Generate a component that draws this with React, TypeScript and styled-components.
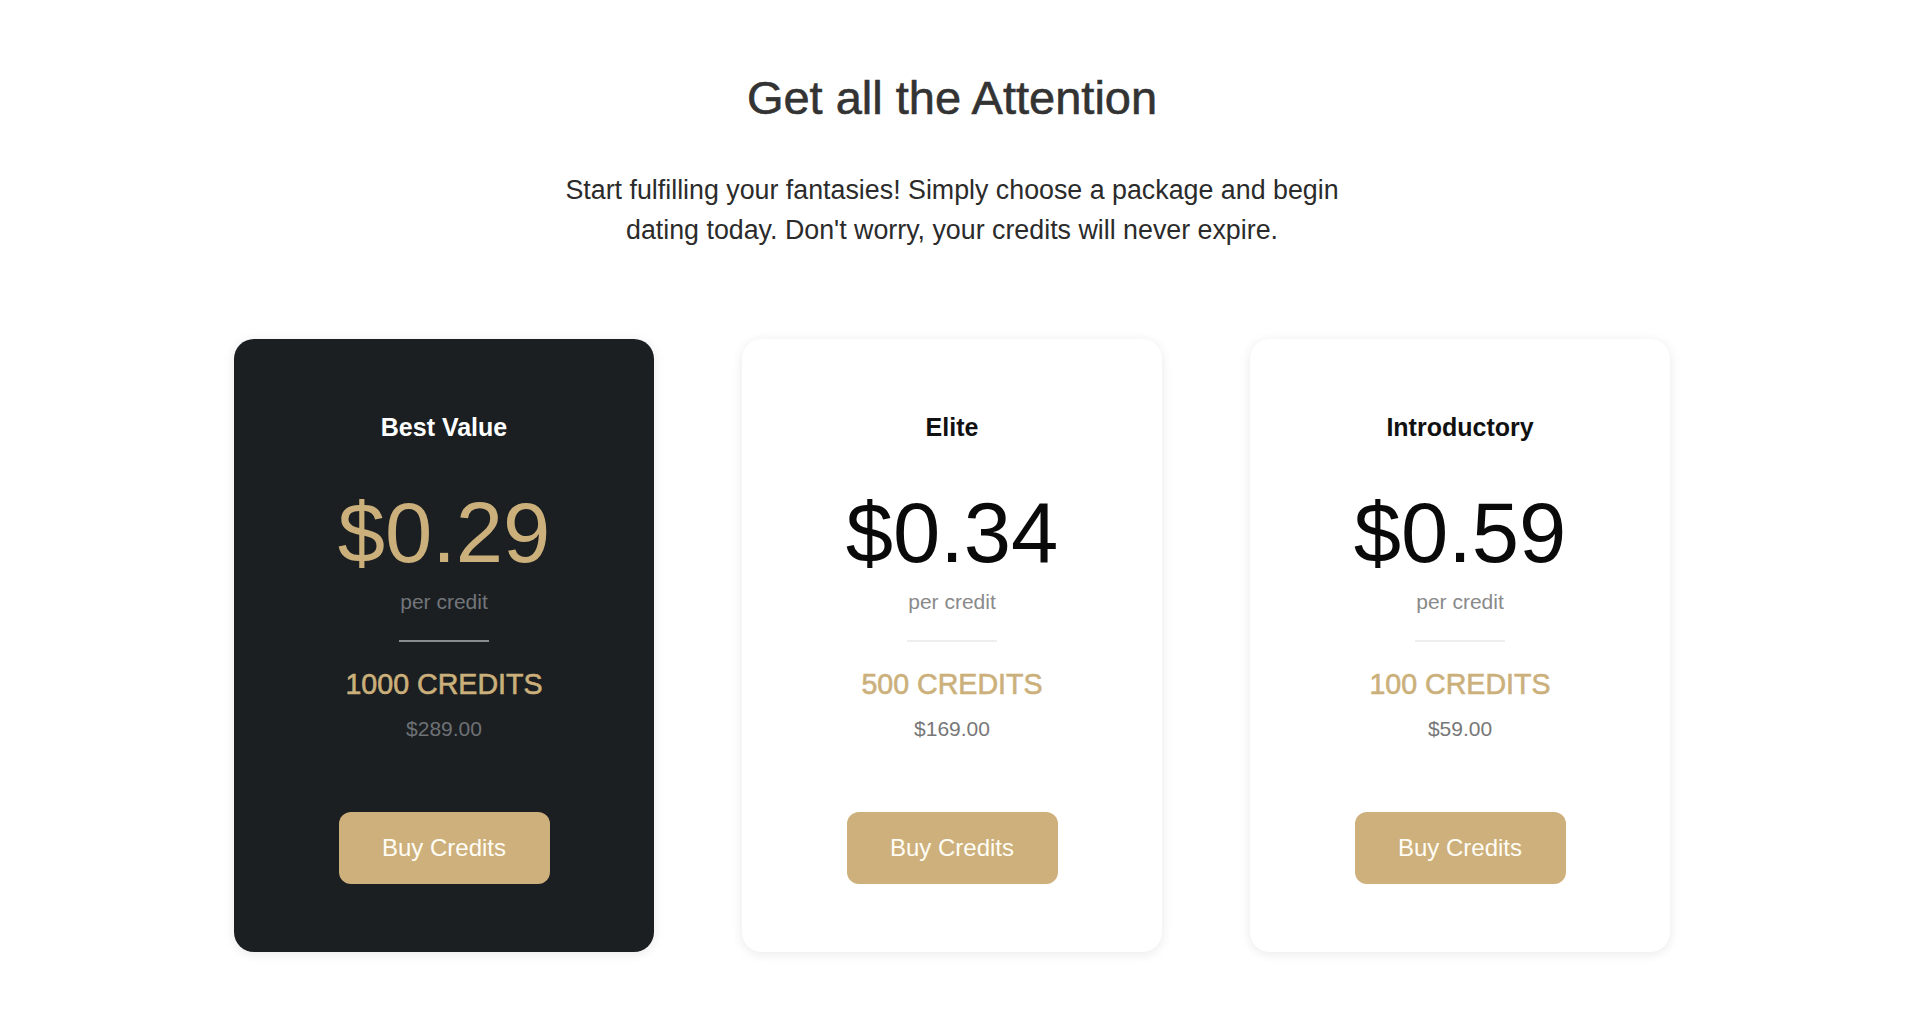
import React from "react";
import styled, { createGlobalStyle } from "styled-components";

const GlobalStyle = createGlobalStyle`
	body {
		margin: 0;
		background: #ffffff;
		font-family: "Liberation Sans", Arial, Helvetica, sans-serif;
	}
`;

type Plan = {
	name: string;
	price: string;
	credits: string;
	total: string;
	featured?: boolean;
};

const plans: Plan[] = [
	{ name: "Best Value", price: "$0.29", credits: "1000 CREDITS", total: "$289.00", featured: true },
	{ name: "Elite", price: "$0.34", credits: "500 CREDITS", total: "$169.00" },
	{ name: "Introductory", price: "$0.59", credits: "100 CREDITS", total: "$59.00" },
];

export default function App() {
	return (
		<Page>
			<GlobalStyle />
			<Title>Get all the Attention</Title>
			<Subtitle>
				Start fulfilling your fantasies! Simply choose a package and begin
				dating today. Don't worry, your credits will never expire.
			</Subtitle>
			<CardRow>
				{plans.map((plan) => (
					<Card key={plan.name} $dark={plan.featured}>
						<PlanName $dark={plan.featured}>{plan.name}</PlanName>
						<Price $dark={plan.featured}>{plan.price}</Price>
						<PerCredit $dark={plan.featured}>per credit</PerCredit>
						<Divider $dark={plan.featured} />
						<Credits>{plan.credits}</Credits>
						<Total $dark={plan.featured}>{plan.total}</Total>
						<BuyButton>Buy Credits</BuyButton>
					</Card>
				))}
			</CardRow>
		</Page>
	);
}

const Page = styled.div`
	display: flex;
	flex-direction: column;
	align-items: center;
	padding: 70px 16px 60px 0;
`;

const Title = styled.h1`
	margin: 0;
	font-size: 47px;
	line-height: 56px;
	font-weight: 400;
	color: #333333;
	-webkit-text-stroke: 0.6px #333333;
`;

const Subtitle = styled.p`
	margin: 44px 0 0;
	width: 820px;
	text-align: center;
	font-size: 26.8px;
	line-height: 40px;
	color: #2b2b2b;
`;

const CardRow = styled.div`
	display: flex;
	gap: 88px;
	margin-top: 89px;
`;

const Card = styled.div<{ $dark?: boolean }>`
	width: 420px;
	box-sizing: border-box;
	display: flex;
	flex-direction: column;
	align-items: center;
	padding: 73px 0 68px;
	border-radius: 20px;
	background: ${(p) => (p.$dark ? "#1b1f22" : "#ffffff")};
	box-shadow: 0 2px 12px rgba(0, 0, 0, 0.09);
`;

const PlanName = styled.div<{ $dark?: boolean }>`
	font-size: 25px;
	line-height: 30px;
	font-weight: 700;
	color: ${(p) => (p.$dark ? "#ffffff" : "#111111")};
`;

const Price = styled.div<{ $dark?: boolean }>`
	margin-top: 48px;
	font-size: 85px;
	line-height: 85px;
	color: ${(p) => (p.$dark ? "#cbb07b" : "#0a0a0a")};
`;

const PerCredit = styled.div<{ $dark?: boolean }>`
	margin-top: 14px;
	font-size: 21px;
	line-height: 26px;
	color: ${(p) => (p.$dark ? "#72767a" : "#8a8a8a")};
`;

const Divider = styled.div<{ $dark?: boolean }>`
	margin-top: 25px;
	width: 90px;
	height: 2px;
	background: ${(p) => (p.$dark ? "#8a8d90" : "#eeeeee")};
`;

const Credits = styled.div`
	margin-top: 25px;
	font-size: 28.6px;
	line-height: 34px;
	color: #cbb07b;
	-webkit-text-stroke: 0.6px #cbb07b;
`;

const Total = styled.div<{ $dark?: boolean }>`
	margin-top: 15px;
	font-size: 21px;
	line-height: 26px;
	color: ${(p) => (p.$dark ? "#6e7175" : "#777777")};
`;

const BuyButton = styled.button`
	margin-top: 70px;
	width: 211px;
	height: 72px;
	border: none;
	border-radius: 12px;
	background: #cdb07b;
	color: #fffdf6;
	font-family: inherit;
	font-size: 24px;
	cursor: pointer;
`;
